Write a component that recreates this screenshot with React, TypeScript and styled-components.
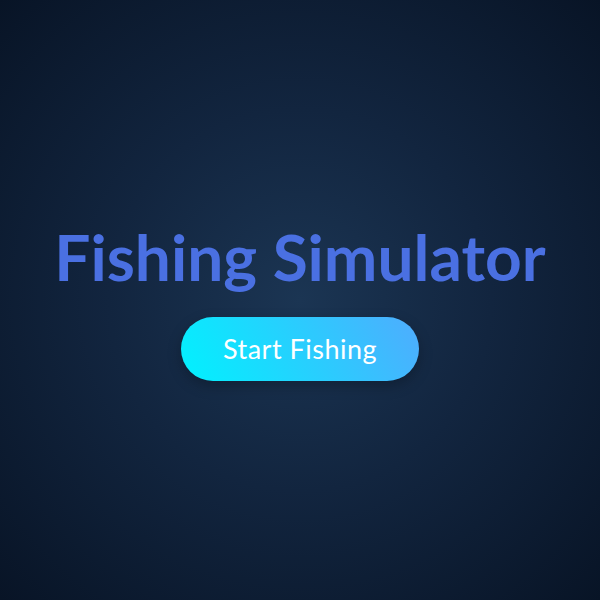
import React from 'react';
import styled, { createGlobalStyle } from 'styled-components';

const GlobalStyle = createGlobalStyle`
    html, body, #root {
        margin: 0;
        height: 100%;
    }

    body {
        font-family: Lato, "Noto Sans", sans-serif;
        background: #0a1628;
    }
`;

export default function App() {
    return (
        <>
            <GlobalStyle />
            <Screen>
                <Title>Fishing Simulator</Title>
                <StartButton type="button">Start Fishing</StartButton>
            </Screen>
        </>
    );
}

const Screen = styled.div`
    display: flex;
    flex-direction: column;
    align-items: center;
    justify-content: center;
    gap: 21px;
    height: 100%;
    background: radial-gradient(circle at 50% 50%, #1b3553 0%, #12253f 45%, #081426 100%);
`;

const Title = styled.h1`
    margin: 0;
    font-size: 64px;
    line-height: 1.2;
    font-weight: 700;
    color: #4a70e2;
`;

const StartButton = styled.button`
    width: 238px;
    height: 64px;
    border: none;
    border-radius: 32px;
    background: linear-gradient(60deg, #00f2fe 0%, #4facfe 100%);
    color: #ffffff;
    font-family: inherit;
    font-size: 27px;
    font-weight: 400;
    letter-spacing: 0.5px;
    box-shadow: 0 5px 14px rgba(0, 0, 0, 0.25);
    cursor: pointer;
`;
